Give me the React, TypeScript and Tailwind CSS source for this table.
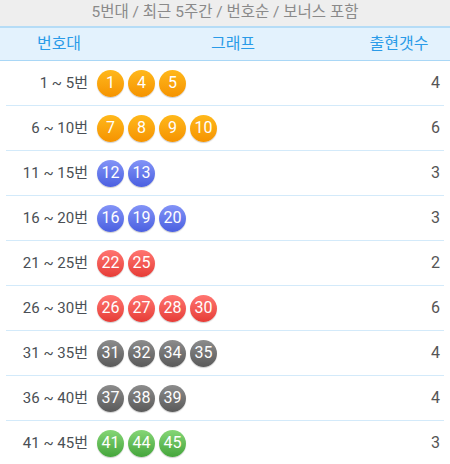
import React from "react";

type Color = "o" | "b" | "r" | "g" | "gr";

const ballClass: Record<Color, string> = {
  o: "bg-gradient-to-b from-[#ffb81a] to-[#f59300]",
  b: "bg-gradient-to-b from-[#8393f7] to-[#4b5fe0]",
  r: "bg-gradient-to-b from-[#ff7470] to-[#e63b36]",
  gr: "bg-gradient-to-b from-[#8c8c8c] to-[#5a5a5a]",
  g: "bg-gradient-to-b from-[#85d676] to-[#44a53b]",
};

const rows: { label: string; nums: number[]; c: Color; count: number }[] = [
  { label: "1 ~ 5번", nums: [1, 4, 5], c: "o", count: 4 },
  { label: "6 ~ 10번", nums: [7, 8, 9, 10], c: "o", count: 6 },
  { label: "11 ~ 15번", nums: [12, 13], c: "b", count: 3 },
  { label: "16 ~ 20번", nums: [16, 19, 20], c: "b", count: 3 },
  { label: "21 ~ 25번", nums: [22, 25], c: "r", count: 2 },
  { label: "26 ~ 30번", nums: [26, 27, 28, 30], c: "r", count: 6 },
  { label: "31 ~ 35번", nums: [31, 32, 34, 35], c: "gr", count: 4 },
  { label: "36 ~ 40번", nums: [37, 38, 39], c: "gr", count: 4 },
  { label: "41 ~ 45번", nums: [41, 44, 45], c: "g", count: 3 },
];

const font = { fontFamily: "Roboto, 'Noto Sans CJK KR', sans-serif" };

export default function App() {
  return (
    <div className="w-[450px] h-[464px] overflow-hidden bg-white" style={font}>
      <div className="h-[28px] bg-[#eeeeee] border-b-2 border-[#b5dcf6] flex items-center justify-center text-[15.5px] text-[#8a8a8a]">
        5번대 / 최근 5주간 / 번호순 / 보너스 포함
      </div>
      <div className="h-[33px] bg-[#e3f2fd] border-b border-[#a9d7f6] flex items-center text-[16px] text-[#2a9be8]">
        <div className="w-[118px] text-center">번호대</div>
        <div className="flex-1 text-center">그래프</div>
        <div className="w-[102px] text-center">출현갯수</div>
      </div>
      {rows.map((r) => (
        <div key={r.label} className="mx-[6px] h-[45px] border-b border-[#d3eafa] flex items-center">
          <div className="w-[82px] text-right text-[15px] text-[#4a4f55]">{r.label}</div>
          <div className="flex gap-[4px] ml-[9px] flex-1">
            {r.nums.map((n) => (
              <div
                key={n}
                className={`w-[27px] h-[27px] rounded-full flex items-center justify-center text-white text-[16px] shadow-[0_1px_1px_rgba(0,0,0,0.2)] ${ballClass[r.c]}`}
              >
                {n}
              </div>
            ))}
          </div>
          <div className="pr-[4px] text-[16px] text-[#555]">{r.count}</div>
        </div>
      ))}
    </div>
  );
}
